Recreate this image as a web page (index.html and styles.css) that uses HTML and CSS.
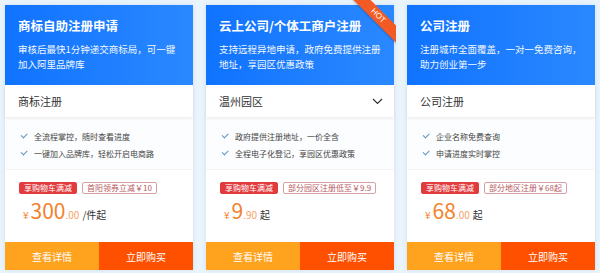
FILE: index.html
```html
<!DOCTYPE html>
<html lang="zh">
<head>
<meta charset="utf-8">
<link rel="stylesheet" href="styles.css">
</head>
<body>
<div class="cards">
  <div class="card">
    <div class="head">
      <div class="title">商标自助注册申请</div>
      <div class="desc">审核后最快1分钟递交商标局，可一键加入阿里品牌库</div>
    </div>
    <div class="select"><span>商标注册</span></div>
    <ul class="feats">
      <li><span class="chk"></span>全流程掌控，随时查看进度</li>
      <li><span class="chk"></span>一键加入品牌库，轻松开启电商路</li>
    </ul>
    <div class="promo">
      <div class="tags"><span class="tag red">享购物车满减</span><span class="tag line">首阳领券立减￥10</span></div>
      <div class="price"><span class="cur">¥</span><span class="num">300</span><span class="dec">.00</span><span class="unit">/件起</span></div>
    </div>
    <div class="btns"><span class="b detail">查看详情</span><span class="b buy">立即购买</span></div>
  </div>
  <div class="card">
    <div class="head">
      <div class="title">云上公司/个体工商户注册</div>
      <div class="desc">支持远程异地申请，政府免费提供注册地址，享园区优惠政策</div>
    </div>
    <div class="ribbon"><span>HOT</span></div>
    <div class="select"><span>温州园区</span>
      <svg class="chev" width="11" height="7" viewBox="0 0 11 7"><path d="M1 1 L5.5 5.5 L10 1" fill="none" stroke="#333" stroke-width="1.2"/></svg>
    </div>
    <ul class="feats">
      <li><span class="chk"></span>政府提供注册地址，一价全含</li>
      <li><span class="chk"></span>全程电子化登记，享园区优惠政策</li>
    </ul>
    <div class="promo">
      <div class="tags"><span class="tag red">享购物车满减</span><span class="tag line">部分园区注册低至￥9.9</span></div>
      <div class="price"><span class="cur">¥</span><span class="num">9</span><span class="dec">.90</span><span class="unit">起</span></div>
    </div>
    <div class="btns"><span class="b detail">查看详情</span><span class="b buy">立即购买</span></div>
  </div>
  <div class="card">
    <div class="head">
      <div class="title">公司注册</div>
      <div class="desc">注册城市全面覆盖，一对一免费咨询，助力创业第一步</div>
    </div>
    <div class="select"><span>公司注册</span></div>
    <ul class="feats">
      <li><span class="chk"></span>企业名称免费查询</li>
      <li><span class="chk"></span>申请进度实时掌控</li>
    </ul>
    <div class="promo">
      <div class="tags"><span class="tag red">享购物车满减</span><span class="tag line">部分地区注册￥68起</span></div>
      <div class="price"><span class="cur">¥</span><span class="num">68</span><span class="dec">.00</span><span class="unit">起</span></div>
    </div>
    <div class="btns"><span class="b detail">查看详情</span><span class="b buy">立即购买</span></div>
  </div>
</div>
</body>
</html>
```
FILE: styles.css
```css
* { box-sizing: border-box; }
html, body { margin: 0; padding: 0; }
body {
  width: 600px; height: 273px; overflow: hidden;
  background: #eaf4fc;
  font-family: "Noto Sans CJK SC", "Noto Sans", sans-serif;
}
.cards {
  display: flex; gap: 13px;
  padding: 5px 5px 0 5px;
}
.card {
  position: relative;
  width: 188px; height: 265px;
  background: #fff;
  display: flex; flex-direction: column;
  box-shadow: 0 0 4px rgba(120,160,200,0.25);
}
.head {
  height: 80px;
  background: linear-gradient(90deg, #1073ff, #2a88ff);
  color: #fff;
  padding: 12px 12px 0 13px;
}
.title { font-size: 12.5px; font-weight: bold; line-height: 18px; }
.desc { font-size: 9.5px; line-height: 15px; margin-top: 7px; opacity: 0.95; }
.select {
  height: 32px;
  display: flex; align-items: center; justify-content: space-between;
  padding: 0 11px 0 13px;
  font-size: 11px; color: #333;
  box-shadow: 0 2px 3px rgba(0,0,0,0.06);
  position: relative; z-index: 1;
}
.chev { display: block; }
.feats {
  list-style: none; margin: 0; padding: 11px 0 0 16px;
  height: 53px;
  border-bottom: 1px solid #f1f3f6;
  background: #fcfdfe;
}
.feats li {
  font-size: 8px; color: #444; line-height: 17px;
  display: flex; align-items: center;
}
.chk {
  display: inline-block; width: 6px; height: 3.5px;
  border-left: 1.2px solid #5f93c2; border-bottom: 1.2px solid #5f93c2;
  transform: rotate(-45deg);
  margin: 0 7px 3px 0;
}
.promo { flex: 1; padding: 12px 0 0 14px; }
.tags { display: flex; gap: 5px; }
.tag {
  font-size: 8px; line-height: 10px; height: 12px;
  padding: 0 4px; border-radius: 2px;
  white-space: nowrap;
}
.tag.red { background: #e23b3d; color: #fff; border: 1px solid #e23b3d; }
.tag.line { border: 1px solid #d7a0a3; color: #b85a5f; }
.price { color: #f2822b; margin-top: 3px; display: flex; align-items: baseline; padding-left: 4px; }
.cur { font-size: 10px; margin-right: 2px; }
.num { font-size: 21px; line-height: 26px; }
.dec { font-size: 10px; color: #f4a367; }
.unit { font-size: 10px; color: #333; margin-left: 3px; }
.btns { display: flex; height: 28px; }
.b {
  flex: 1; display: flex; align-items: center; justify-content: center;
  color: #fff; font-size: 10px;
}
.detail { background: #ffa31f; }
.buy { background: #ff5000; }
.ribbon {
  position: absolute; top: -5px; right: -2px;
  width: 48px; height: 48px; overflow: hidden;
}
.ribbon span {
  position: absolute; top: 10px; right: -17px;
  width: 70px; height: 12px;
  background: #f35a24;
  color: #fff; font-size: 8px; line-height: 12px; text-align: center;
  font-family: "Liberation Sans", sans-serif;
  transform: rotate(45deg);
  box-shadow: 0 1px 2px rgba(0,0,0,0.2);
}
```
